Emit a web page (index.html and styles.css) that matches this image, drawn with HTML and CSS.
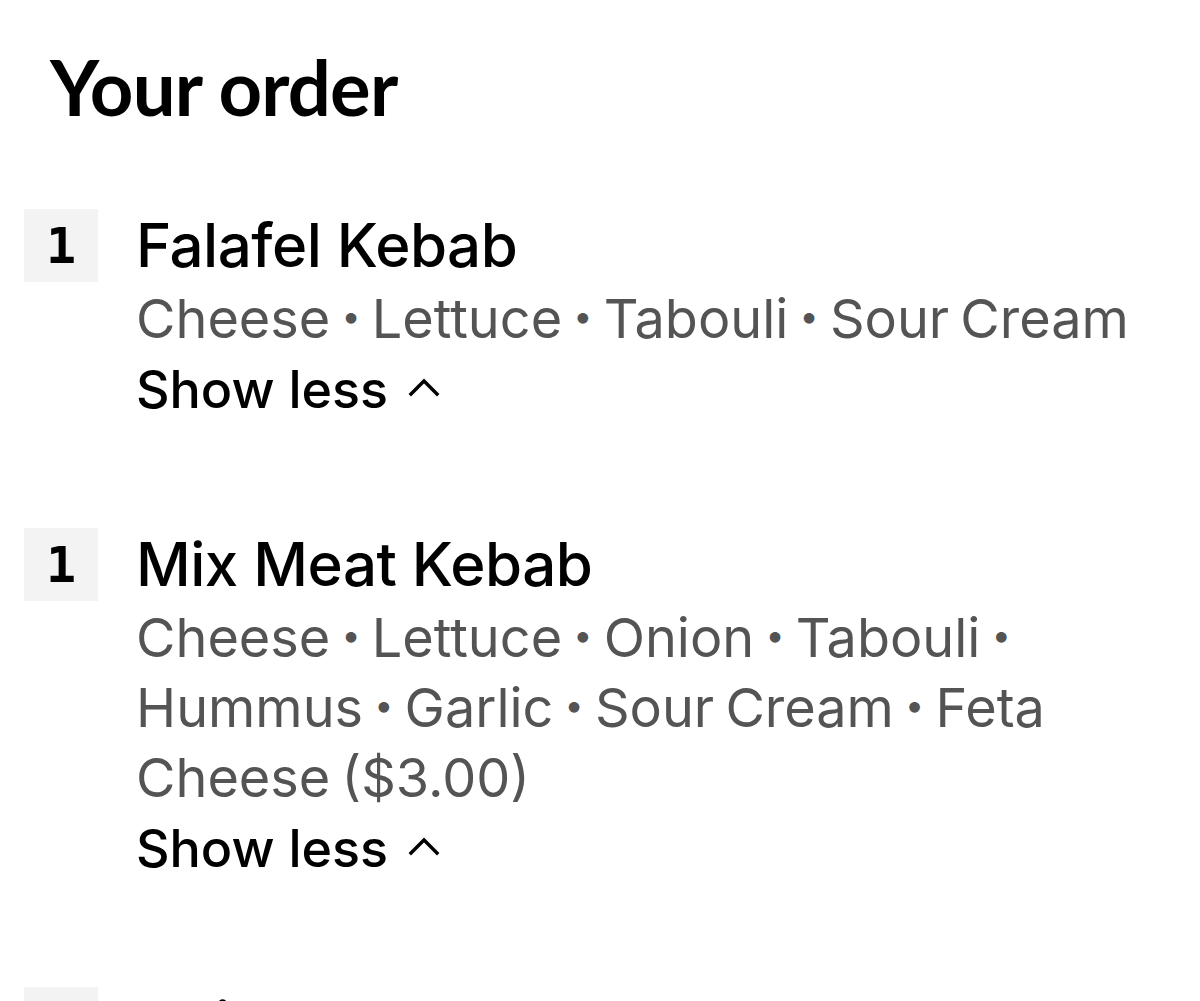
FILE: index.html
```html
<!DOCTYPE html>
<html lang="en">
<head>
<meta charset="utf-8">
<title>Your order</title>
<link rel="stylesheet" href="styles.css">
</head>
<body>
<main class="order">
  <h1 class="order-title">Your order</h1>
  <ul class="items">
    <li class="item">
      <div class="qty">1</div>
      <div class="info">
        <div class="name">Falafel Kebab</div>
        <div class="details">Cheese <span class="dot">•</span> Lettuce <span class="dot">•</span> Tabouli <span class="dot">•</span> Sour Cream</div>
        <button class="toggle">Show less
          <svg class="chev" viewBox="0 0 32 20" width="32" height="20" aria-hidden="true"><path d="M3 17 L16 4 L29 17" fill="none" stroke="#000" stroke-width="3.4" stroke-linecap="square"/></svg>
        </button>
      </div>
    </li>
    <li class="item">
      <div class="qty">1</div>
      <div class="info">
        <div class="name">Mix Meat Kebab</div>
        <div class="details">Cheese <span class="dot">•</span> Lettuce <span class="dot">•</span> Onion <span class="dot">•</span> Tabouli <span class="dot">•</span> Hummus <span class="dot">•</span> Garlic <span class="dot">•</span> Sour Cream <span class="dot">•</span> Feta Cheese ($3.00)</div>
        <button class="toggle">Show less
          <svg class="chev" viewBox="0 0 32 20" width="32" height="20" aria-hidden="true"><path d="M3 17 L16 4 L29 17" fill="none" stroke="#000" stroke-width="3.4" stroke-linecap="square"/></svg>
        </button>
      </div>
    </li>
    <li class="item">
      <div class="qty"></div>
      <div class="info">
        <div class="name">Chicken Kebab</div>
      </div>
    </li>
  </ul>
</main>
</body>
</html>
```
FILE: styles.css
```css
html, body {
  margin: 0;
  padding: 0;
  background: #fff;
}
body {
  font-family: Inter, "Noto Sans", sans-serif;
  color: #000;
  overflow: hidden;
  height: 1001px;
}
.order {
  padding: 0 0 0 24px;
}
.order-title {
  margin: 0;
  padding: 45px 0 0 26px;
  font-family: Lato, Inter, sans-serif;
  font-size: 76px;
  line-height: 84px;
  font-weight: 700;
  letter-spacing: -0.8px;
}
.items {
  list-style: none;
  margin: 0;
  padding: 0;
}
.item {
  display: flex;
  gap: 38px;
  margin-top: 80px;
}
.item + .item {
  margin-top: 102px;
}
.qty {
  flex: none;
  width: 74px;
  height: 73px;
  background: #f3f3f3;
  display: flex;
  align-items: center;
  justify-content: center;
  font-family: "DejaVu Sans Mono", monospace;
  font-size: 50px;
  font-weight: 700;
}
.info {
  display: flex;
  flex-direction: column;
  align-items: flex-start;
  width: 1040px;
}
.name {
  font-size: 60px;
  line-height: 73px;
  font-weight: 500;
  letter-spacing: -0.5px;
}
.details {
  font-size: 54px;
  line-height: 70px;
  color: #545454;
  width: 1040px;
  word-spacing: -4px;
  padding-top: 2px;
}
.dot {
  display: inline-block;
  font-size: 34px;
  line-height: 34px;
  vertical-align: 0.3em;
  word-spacing: 0;
}
.toggle {
  display: flex;
  align-items: center;
  gap: 20px;
  margin: 0;
  padding: 0;
  border: 0;
  background: none;
  font-family: inherit;
  font-size: 52px;
  line-height: 72px;
  font-weight: 500;
  color: #000;
}
.chev {
  display: block;
  margin-top: -6px;
}
```
